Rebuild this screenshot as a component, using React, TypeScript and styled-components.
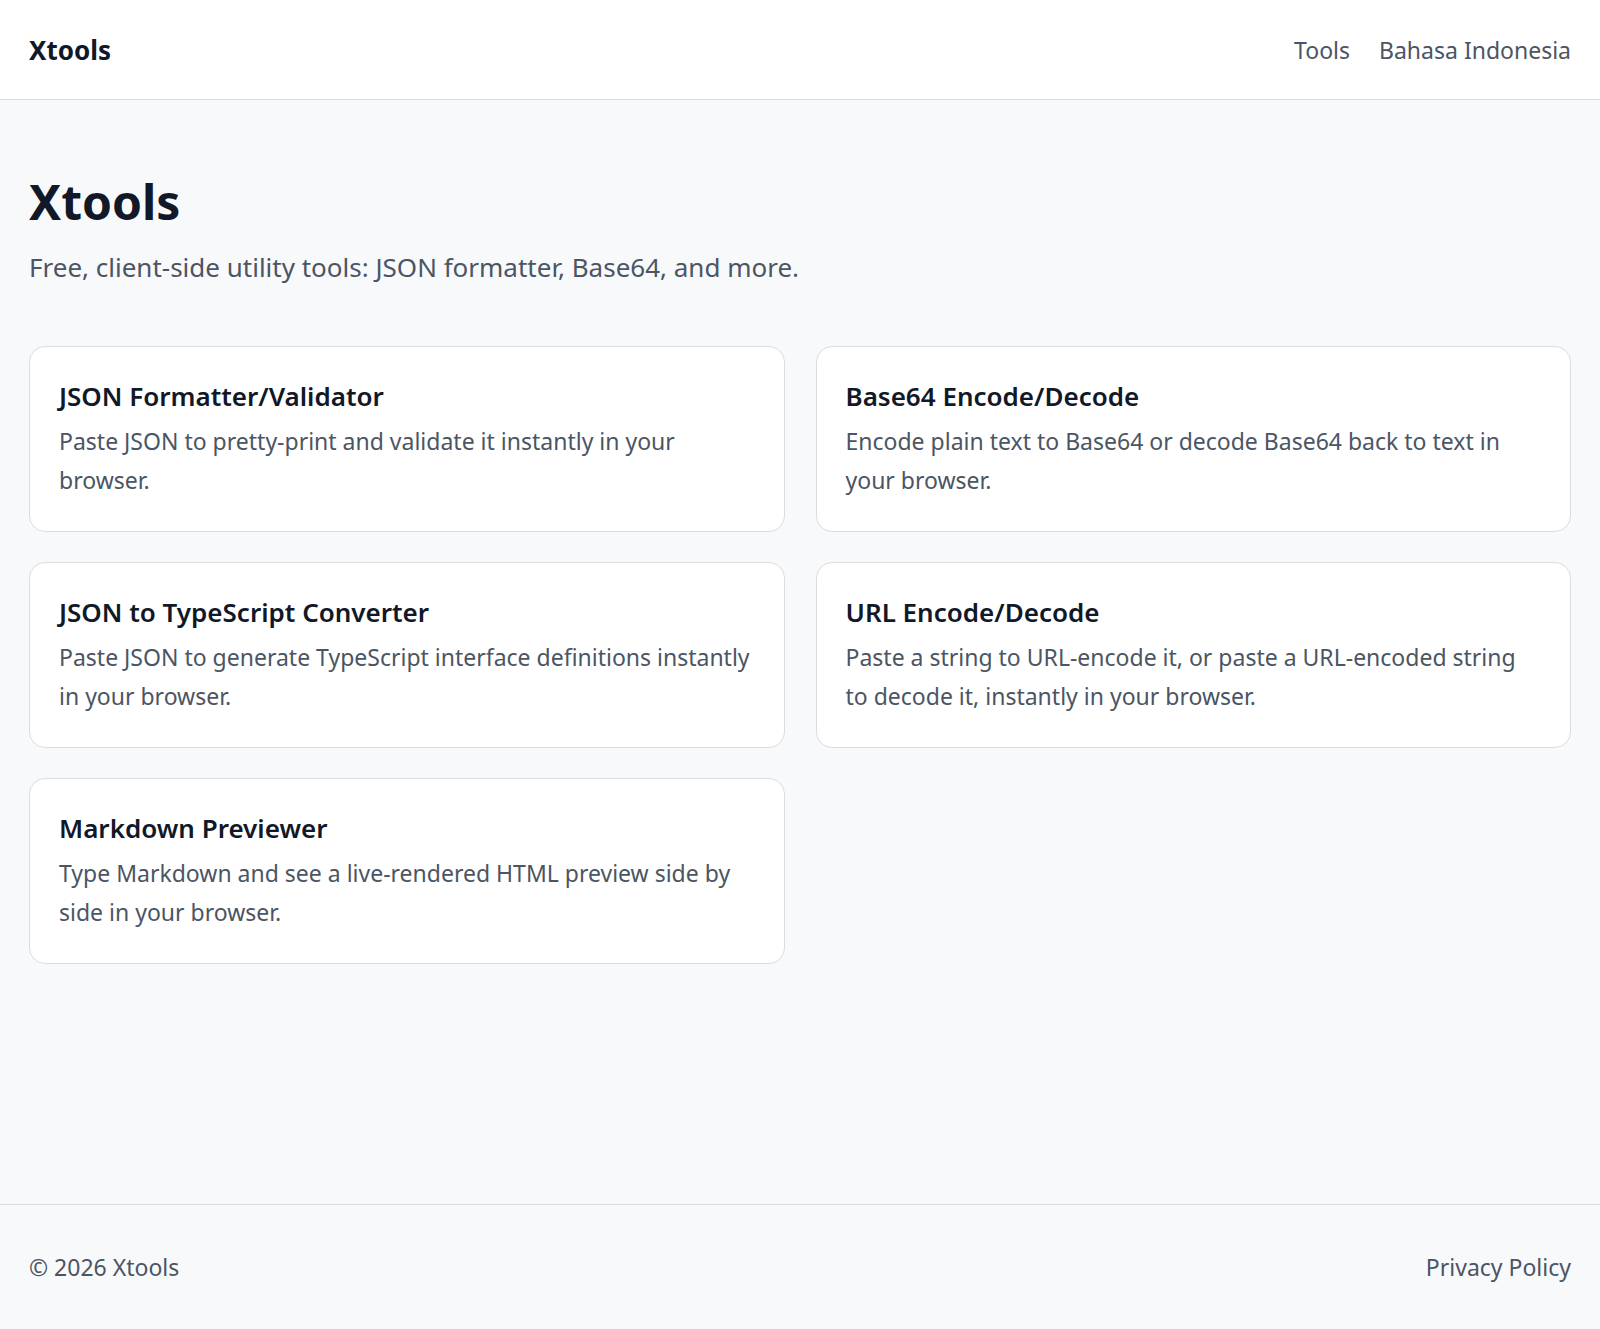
import React from "react"
import styled, { createGlobalStyle } from "styled-components"

const tools = [
  { title: "JSON Formatter/Validator", desc: "Paste JSON to pretty-print and validate it instantly in your browser." },
  { title: "Base64 Encode/Decode", desc: "Encode plain text to Base64 or decode Base64 back to text in your browser." },
  { title: "JSON to TypeScript Converter", desc: "Paste JSON to generate TypeScript interface definitions instantly in your browser." },
  { title: "URL Encode/Decode", desc: "Paste a string to URL-encode it, or paste a URL-encoded string to decode it, instantly in your browser." },
  { title: "Markdown Previewer", desc: "Type Markdown and see a live-rendered HTML preview side by side in your browser." },
]

const App = () => {
  return (
    <Page>
      <GlobalStyle />
      <Header>
        <Logo>Xtools</Logo>
        <Nav>
          <a>Tools</a>
          <a>Bahasa Indonesia</a>
        </Nav>
      </Header>
      <Main>
        <Title>Xtools</Title>
        <Subtitle>Free, client-side utility tools: JSON formatter, Base64, and more.</Subtitle>
        <Grid>
          {tools.map(tool => (
            <Card key={tool.title}>
              <CardTitle>{tool.title}</CardTitle>
              <CardText>{tool.desc}</CardText>
            </Card>
          ))}
        </Grid>
      </Main>
      <Footer>
        <span>© 2026 Xtools</span>
        <a>Privacy Policy</a>
      </Footer>
    </Page>
  )
}

const GlobalStyle = createGlobalStyle`
  body {
    margin: 0;
    background: #f8f9fb;
    font-family: "Noto Sans", "Open Sans", sans-serif;
    color: #111827;
  }
`

const Page = styled.div`
  min-height: 1329px;
  display: flex;
  flex-direction: column;
`

const Header = styled.header`
  height: 100px;
  box-sizing: border-box;
  background: #fff;
  border-bottom: 1px solid #d9dce1;
  display: flex;
  align-items: center;
  justify-content: space-between;
  padding: 0 29px;
`

const Logo = styled.div`
  font-size: 26px;
  font-weight: 700;
`

const Nav = styled.nav`
  display: flex;
  gap: 29px;
  a {
    font-size: 23px;
    color: #4b5563;
  }
`

const Main = styled.main`
  flex: 1;
  padding: 67px 29px 0;
`

const Title = styled.h1`
  margin: 0;
  font-size: 48px;
  font-weight: 700;
  line-height: 70px;
`

const Subtitle = styled.p`
  margin: 10px 0 0;
  font-size: 26px;
  color: #4b5563;
  line-height: 40px;
`

const Grid = styled.div`
  margin-top: 59px;
  display: grid;
  grid-template-columns: 1fr 1fr;
  gap: 30px 31px;
`

const Card = styled.div`
  height: 186px;
  box-sizing: border-box;
  background: #fff;
  border: 1.5px solid #d9dce1;
  border-radius: 16px;
  padding: 29px 29px;
`

const CardTitle = styled.h2`
  margin: 0;
  font-size: 26px;
  font-weight: 600;
  line-height: 40px;
`

const CardText = styled.p`
  margin: 6px 0 0;
  font-size: 23px;
  line-height: 39px;
  color: #4b5563;
`

const Footer = styled.footer`
  height: 125px;
  box-sizing: border-box;
  border-top: 1px solid #d9dce1;
  display: flex;
  align-items: center;
  justify-content: space-between;
  padding: 0 29px 0;
  font-size: 23px;
  color: #4b5563;
`

export default App
